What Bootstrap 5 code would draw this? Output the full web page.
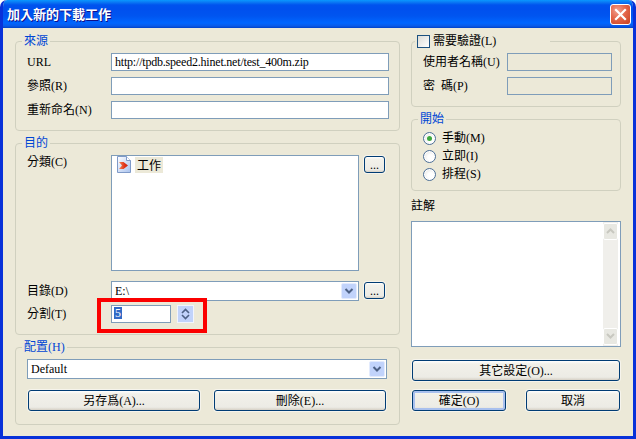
<!DOCTYPE html>
<html lang="zh-Hant">
<head>
<meta charset="utf-8">
<title>加入新的下載工作</title>
<link rel="stylesheet" href="https://cdn.jsdelivr.net/npm/bootstrap@5.3.0/dist/css/bootstrap.min.css">
<style>
html,body{margin:0;background:#fff;}
body{font-family:"Liberation Serif","Noto Sans CJK TC",serif;font-size:12px;line-height:14px;color:#000;}
.xp-win{width:636px;height:439px;position:relative;overflow:hidden;background:#ece9d8;border:solid #0831d9;border-width:0 3px 3px 3px;border-radius:7px 7px 0 0;box-sizing:border-box;}
.xp-title{height:28px;margin:0 -3px;padding:0 5px 0 7px;border-radius:7px 7px 0 0;color:#fff;font-family:"Noto Sans CJK TC",sans-serif;font-weight:700;font-size:13px;text-shadow:1px 1px 0 #0f1089;background:linear-gradient(180deg,#0997ff 0,#0a7cf5 2px,#0053ee 5px,#0050ee 9px,#0055f0 16px,#0066ff 23px,#0a5ae8 26px,#0042c8 28px);}
.xp-close{width:21px;height:21px;padding:0;border:1px solid #fff;border-radius:3px;background:radial-gradient(circle at 35% 30%,#f0a090 0,#e4664a 45%,#c8401f 100%);}
.xp-main{padding:6px 12px 0 12px;gap:11px;}
.xp-left{width:385px;}
.xp-right{width:210px;}
.xp-group{border:1px solid #d0d0bf;border-radius:4px;padding:0 11px;margin:0 0 5px;}
.xp-group legend{float:none;width:auto;margin:0 0 0 -5px;padding:0 2px;font-size:12px;line-height:14px;color:#0046d5;}
.xp-group legend.xp-chklegend{margin-left:-8px;padding-right:54px;}
.xp-pt{padding-top:5px;}
.xp-pb{padding-bottom:5px;}
.xp-lab{width:84px;flex:none;white-space:nowrap;}
.form-control.xp-in{flex:none;height:18px;min-height:0;padding:0 3px;border:1px solid #7f9db9;border-radius:0;font:12px/16px "Liberation Serif","Noto Sans CJK TC",serif;letter-spacing:-.2px;color:#000;background:#fff;}
.form-control.xp-in:disabled{background:#ece9d8;}
.xp-w278{width:278px;}
.xp-row{height:18px;margin-bottom:6px;}
.xp-list{width:248px;height:116px;background:#fff;border:1px solid #7f9db9;padding:0 5px;}
.xp-sel{background:#ece9d8;padding:0 2px;margin:1px 0 0 4px;height:16px;line-height:15px;font-family:"Noto Sans CJK TC",sans-serif;}
.btn.xp-btn{padding:0;border:1px solid #003c74;border-radius:3px;font-size:12px;line-height:14px;color:#000;background:linear-gradient(180deg,#fff 0,#f2f1ea 15%,#ecebe5 85%,#d6d0c5 100%);box-shadow:0 0 0 1px rgba(255,255,255,.5);}
.btn.xp-def{box-shadow:inset 0 0 0 2px #a9c0ee,0 0 0 1px rgba(255,255,255,.5);}
.btn.xp-dots{width:21px;height:17px;line-height:14px;margin:1px 0 0 5px;flex:none;}
.xp-combo{background:#fff;border:1px solid #7f9db9;height:20px;font-size:12px;line-height:18px;padding:0 1px 0 3px;}
.xp-w248{width:248px;flex:none;}
.xp-mt10{margin-top:10px;}
.xp-arrow{width:16px;height:16px;background:#c1d3fb;border:1px solid #e3ebfd;border-radius:2px;flex:none;}
.xp-arrow svg,.xp-sbtn svg{display:block;margin:auto;}
.xp-spin{width:17px;height:18px;margin-left:6px;background:#c1d3fb;border:1px solid #f2f5fe;padding:2px 0;flex:none;}
.xp-spin svg{display:block;}
.form-control.xp-split{width:60px;padding:1px 2px 0 2px;}
.xp-caret{color:#fff;background:#316ac5;display:block;padding:0 1px;width:8px;height:12px;line-height:12px;}
.xp-mb11{margin-bottom:11px;}
.xp-red{position:absolute;left:94px;top:298px;width:110px;height:35px;border:4px solid #fb0000;pointer-events:none;}
.xp-chk{width:13px;height:13px;border:1px solid #1c5180;background:linear-gradient(135deg,#dcdcd7,#fff);flex:none;margin-right:3px;}
.xp-radio{width:13px;height:13px;border-radius:50%;border:1px solid #4c6f97;background:radial-gradient(circle at 60% 60%,#fff 30%,#dcdcd7 100%);display:flex;align-items:center;justify-content:center;flex:none;margin-right:6px;box-shadow:inset 0 0 0 1px #fff;}
.xp-radio i{display:block;width:5px;height:5px;border-radius:50%;background:#3fa83f;}
.xp-opt{height:18px;}
.xp-radios{padding:3px 0 7px;}
.xp-note{margin:8px 0 8px;}
.xp-area{height:126px;border:1px solid #7f9db9;background:#fff;}
.xp-sb{width:17px;background:#f0efeb;padding:1px 0;margin-right:1px;border-left:1px solid #fff;border-right:1px solid #fff;}
.xp-sbtn{height:17px;background:#e8e8e2;border:1px solid #fff;border-radius:2px;padding-top:4px;}
.btn.xp-wide{width:172px;height:21px;}
.xp-btnrow{margin:11px 0 13px;padding:0 2px 0 1px;}
.xp-combow{width:360px;}
.btn.xp-full{width:208px;height:21px;margin:13px 0 9px 1px;}
.xp-okrow{padding:0 1px;}
.btn.xp-ok{width:94px;height:21px;}
.xp-right .form-control.xp-in{width:105px;}
</style>
</head>
<body>
<div class="xp-win">
  <div class="xp-title d-flex align-items-center justify-content-between">
    <span>加入新的下載工作</span>
    <button class="xp-close d-flex align-items-center justify-content-center" type="button" aria-label="關閉">
      <svg width="13" height="13" viewBox="0 0 13 13"><path d="M2 2l9 9M11 2l-9 9" stroke="#fff" stroke-width="2.2" stroke-linecap="square"/></svg>
    </button>
  </div>
  <div class="xp-main d-flex">
    <div class="xp-left">
      <fieldset class="xp-group">
        <legend>來源</legend>
        <div class="xp-pt xp-pb">
        <div class="xp-row d-flex align-items-center"><span class="xp-lab">URL</span><input class="form-control xp-in xp-w278" value="http://tpdb.speed2.hinet.net/test_400m.zip"></div>
        <div class="xp-row d-flex align-items-center"><span class="xp-lab">參照(R)</span><input class="form-control xp-in xp-w278"></div>
        <div class="xp-row d-flex align-items-center"><span class="xp-lab">重新命名(N)</span><input class="form-control xp-in xp-w278"></div>
        </div>
      </fieldset>
      <fieldset class="xp-group">
        <legend>目的</legend>
        <div class="d-flex xp-pt">
          <span class="xp-lab">分類(C)</span>
          <div class="xp-list d-flex align-items-start">
            <svg width="14" height="17" viewBox="0 0 14 17"><defs><linearGradient id="d" x1="0" x2="1" y1="0" y2="1"><stop offset="0" stop-color="#fff"/><stop offset="1" stop-color="#a9c2ee"/></linearGradient><linearGradient id="r" x1="0" x2="1" y1="0" y2="0"><stop offset="0" stop-color="#f28a5a"/><stop offset=".6" stop-color="#e2341a"/><stop offset="1" stop-color="#c8280f"/></linearGradient></defs><path d="M.5.5h9l4 4v12H.5z" fill="url(#d)" stroke="#7f9ac8"/><path d="M9.5.5v4h4" fill="#fff" stroke="#7f9ac8"/><path d="M2 6h4.5L11 9.5 6.5 13H2l3-3.5z" fill="url(#r)"/></svg>
            <span class="xp-sel">工作</span>
          </div>
          <button class="btn xp-btn xp-dots" type="button">...</button>
        </div>
        <div class="d-flex align-items-start xp-mt10">
          <span class="xp-lab align-self-center">目錄(D)</span>
          <div class="xp-combo xp-w248 d-flex align-items-center justify-content-between"><span>E:\</span><span class="xp-arrow"><svg width="14" height="14" viewBox="0 0 14 14"><path d="M3.5 5L7 8.5 10.5 5" fill="none" stroke="#4d6185" stroke-width="2"/></svg></span></div>
          <button class="btn xp-btn xp-dots" type="button">...</button>
        </div>
        <div class="d-flex align-items-center mt-1 xp-mb11">
          <span class="xp-lab">分割(T)</span>
          <div class="form-control xp-in xp-split"><span class="xp-caret">5</span></div>
          <div class="xp-spin d-flex flex-column justify-content-between"><svg width="15" height="6" viewBox="0 0 15 6"><path d="M4 5l3.5-3.5L11 5" fill="none" stroke="#4d6185" stroke-width="1.6"/></svg><svg width="15" height="6" viewBox="0 0 15 6"><path d="M4 1l3.5 3.5L11 1" fill="none" stroke="#4d6185" stroke-width="1.6"/></svg></div>
        </div>
      </fieldset>
      <fieldset class="xp-group mb-0">
        <legend>配置(H)</legend>
        <div class="xp-pt">
          <div class="xp-combo xp-combow d-flex align-items-center justify-content-between"><span>Default</span><span class="xp-arrow"><svg width="14" height="14" viewBox="0 0 14 14"><path d="M3.5 5L7 8.5 10.5 5" fill="none" stroke="#4d6185" stroke-width="2"/></svg></span></div>
        </div>
        <div class="d-flex justify-content-between xp-btnrow">
          <button class="btn xp-btn xp-wide" type="button">另存爲(A)...</button>
          <button class="btn xp-btn xp-wide" type="button">刪除(E)...</button>
        </div>
      </fieldset>
    </div>
    <div class="xp-right">
      <fieldset class="xp-group">
        <legend class="xp-chklegend d-flex align-items-center"><span class="xp-chk"></span><span class="text-black">需要驗證(L)</span></legend>
        <div class="xp-pt xp-pb">
        <div class="xp-row d-flex align-items-center"><span class="xp-lab">使用者名稱(U)</span><input class="form-control xp-in" disabled></div>
        <div class="xp-row d-flex align-items-center"><span class="xp-lab">密&nbsp;&nbsp;碼(P)</span><input class="form-control xp-in" disabled></div>
        </div>
      </fieldset>
      <fieldset class="xp-group">
        <legend>開始</legend>
        <div class="xp-radios">
        <div class="xp-opt d-flex align-items-center"><span class="xp-radio"><i></i></span>手動(M)</div>
        <div class="xp-opt d-flex align-items-center"><span class="xp-radio"></span>立即(I)</div>
        <div class="xp-opt d-flex align-items-center"><span class="xp-radio"></span>排程(S)</div>
        </div>
      </fieldset>
      <div class="xp-note">註解</div>
      <div class="xp-area d-flex justify-content-end">
        <div class="xp-sb d-flex flex-column justify-content-between">
          <div class="xp-sbtn"><svg width="9" height="6" viewBox="0 0 9 6"><path d="M1 5l3.5-3.5L8 5" fill="none" stroke="#c8c8c0" stroke-width="2"/></svg></div>
          <div class="xp-sbtn"><svg width="9" height="6" viewBox="0 0 9 6"><path d="M1 1l3.5 3.5L8 1" fill="none" stroke="#c8c8c0" stroke-width="2"/></svg></div>
        </div>
      </div>
      <button class="btn xp-btn xp-full d-block" type="button">其它設定(O)...</button>
      <div class="d-flex justify-content-between xp-okrow">
        <button class="btn xp-btn xp-def xp-ok" type="button">確定(O)</button>
        <button class="btn xp-btn xp-ok" type="button">取消</button>
      </div>
    </div>
  </div>
  <div class="xp-red"></div>
</div>
<script src="https://cdn.jsdelivr.net/npm/bootstrap@5.3.0/dist/js/bootstrap.bundle.min.js"></script>
</body>
</html>
